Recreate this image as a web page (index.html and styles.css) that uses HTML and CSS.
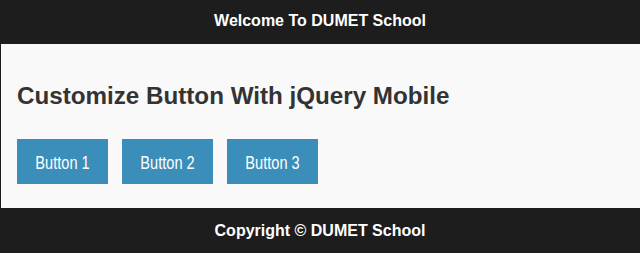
FILE: index.html
```html
<!DOCTYPE html>
<html lang="en">
<head>
    <meta charset="UTF-8">
    <meta name="viewport" content="width=device-width, initial-scale=1.0">
    <title>DUMET School</title>
    <link rel="stylesheet" href="styles.css">
</head>
<body>
    <div class="page">
        <div class="header">
            <h1>Welcome To DUMET School</h1>
        </div>
        <div class="content">
            <h2>Customize Button With jQuery Mobile</h2>
            <div class="buttons">
                <a href="#" class="btn"><span class="narrow">Button 1</span></a>
                <a href="#" class="btn"><span class="narrow">Button 2</span></a>
                <a href="#" class="btn"><span class="narrow">Button 3</span></a>
            </div>
        </div>
        <div class="footer">
            <h4>Copyright &copy; DUMET School</h4>
        </div>
    </div>
</body>
</html>
```

FILE: styles.css
```css
body {
    margin: 0;
    font-family: 'Liberation Sans', Arial, sans-serif;
    background: #f9f9f9;
}

/* button labels are rendered in a condensed face in the original */
.narrow {
    display: inline-block;
    transform: scaleX(0.81);
}

.header,
.footer {
    background: #1d1d1d;
    color: #ffffff;
    text-align: center;
}

.header {
    height: 44px;
    padding-top: 11px;
    box-sizing: border-box;
}

.footer {
    padding-top: 13px;
    height: 52px;
    box-sizing: border-box;
}

.header h1,
.footer h4 {
    margin: 0;
    font-size: 16px;
    font-weight: bold;
    line-height: 20px;
}

.content {
    border-left: 1px solid #1d1d1d;
    padding: 16px 16px 24px;
}

h2 {
    margin: 22px 0 29px;
    font-size: 24.2px;
    line-height: 28px;
    font-weight: bold;
    color: #333333;
}

.buttons {
    display: flex;
    gap: 14px;
}

.btn {
    display: flex;
    align-items: center;
    justify-content: center;
    width: 91px;
    height: 45px;
    padding-top: 4px;
    box-sizing: border-box;
    background: #3a8eb9;
    color: #ffffff;
    text-decoration: none;
    font-size: 18px;
}
```
